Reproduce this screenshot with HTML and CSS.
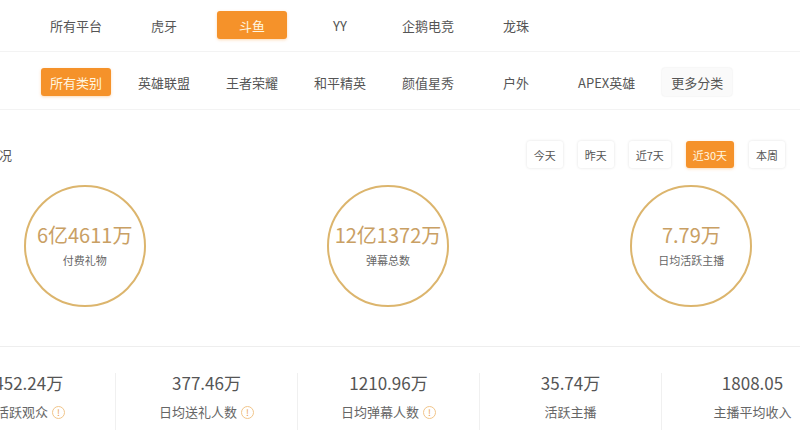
FILE: index.html
```html
<!DOCTYPE html>
<html lang="zh-CN">
<head>
    <meta charset="UTF-8">
    <meta name="viewport" content="width=device-width, initial-scale=1.0">
    <title>直播数据概况</title>
    <link rel="stylesheet" href="styles.css">
</head>
<body>
    <!-- Platform filter -->
    <div class="filter-row platforms">
        <span class="tab">所有平台</span>
        <span class="tab">虎牙</span>
        <span class="tab active">斗鱼</span>
        <span class="tab">YY</span>
        <span class="tab">企鹅电竞</span>
        <span class="tab">龙珠</span>
    </div>

    <!-- Category filter -->
    <div class="filter-row categories">
        <span class="tab active">所有类别</span>
        <span class="tab">英雄联盟</span>
        <span class="tab">王者荣耀</span>
        <span class="tab">和平精英</span>
        <span class="tab">颜值星秀</span>
        <span class="tab">户外</span>
        <span class="tab">APEX英雄</span>
        <span class="tab more">更多分类</span>
    </div>

    <div class="overview">
        <div class="overview-head">
            <h2 class="overview-title">整体概况</h2>
            <div class="date-range">
                <span class="date-btn">今天</span>
                <span class="date-btn">昨天</span>
                <span class="date-btn">近7天</span>
                <span class="date-btn active">近30天</span>
                <span class="date-btn">本周</span>
            </div>
        </div>

        <div class="rings">
            <div class="ring-cell">
                <div class="ring">
                    <div class="ring-value">6亿4611万</div>
                    <div class="ring-label">付费礼物</div>
                </div>
            </div>
            <div class="ring-cell">
                <div class="ring">
                    <div class="ring-value">12亿1372万</div>
                    <div class="ring-label">弹幕总数</div>
                </div>
            </div>
            <div class="ring-cell">
                <div class="ring">
                    <div class="ring-value">7.79万</div>
                    <div class="ring-label">日均活跃主播</div>
                </div>
            </div>
        </div>

        <div class="stats">
            <div class="stat">
                <div class="stat-value">1452.24万</div>
                <div class="stat-label">日活跃观众 <i class="info">!</i></div>
            </div>
            <div class="stat">
                <div class="stat-value">377.46万</div>
                <div class="stat-label">日均送礼人数 <i class="info">!</i></div>
            </div>
            <div class="stat">
                <div class="stat-value">1210.96万</div>
                <div class="stat-label">日均弹幕人数 <i class="info">!</i></div>
            </div>
            <div class="stat">
                <div class="stat-value">35.74万</div>
                <div class="stat-label">活跃主播</div>
            </div>
            <div class="stat">
                <div class="stat-value">1808.05</div>
                <div class="stat-label">主播平均收入</div>
            </div>
        </div>
    </div>
</body>
</html>
```

FILE: styles.css
```css
/* Base */
body {
    margin: 0;
    background: #fff;
    color: #555;
    font-family: "Noto Sans CJK SC", "Noto Sans", sans-serif;
    overflow: hidden;
}

/* Filter rows */
.filter-row {
    display: flex;
    gap: 18px;
    padding-left: 41px;
    border-bottom: 1px solid #f3f3f3;
}

.platforms {
    padding-top: 11px;
    height: 52px;
    box-sizing: border-box;
}

.categories {
    padding-top: 16px;
    height: 58px;
    box-sizing: border-box;
}

.tab {
    min-width: 70px;
    height: 28px;
    padding: 0 9px;
    box-sizing: border-box;
    display: flex;
    align-items: center;
    justify-content: center;
    font-size: 13px;
    color: #555;
    border-radius: 3px;
    white-space: nowrap;
}

.tab.active {
    background: #f5922a;
    color: #fff6e0;
    box-shadow: 0 1px 3px rgba(245, 146, 42, 0.35);
}

.tab.more {
    background: #fafafa;
    box-shadow: 0 0 2px rgba(0, 0, 0, 0.12);
}

/* Overview block (wider than the window, cropped on both sides) */
.overview {
    margin-left: -67px;
    width: 910px;
}

.overview-head {
    display: flex;
    align-items: center;
    justify-content: space-between;
    padding: 31px 58px 0 27px;
}

.overview-title {
    margin: 0;
    font-size: 13px;
    font-weight: normal;
    color: #555;
}

.date-range {
    display: flex;
    gap: 15px;
}

.date-btn {
    height: 27px;
    padding: 0 7px;
    display: flex;
    align-items: center;
    font-size: 11px;
    color: #555;
    border-radius: 3px;
    background: #fff;
    box-shadow: 0 0 3px rgba(0, 0, 0, 0.12);
}

.date-btn.active {
    background: #f5922a;
    color: #fff6e0;
    box-shadow: 0 1px 3px rgba(245, 146, 42, 0.35);
}

/* Rings */
.rings {
    display: grid;
    grid-template-columns: repeat(3, 1fr);
    padding: 17px 0 39px;
    border-bottom: 1px solid #eee;
}

.ring-cell {
    display: flex;
    justify-content: center;
}

.ring {
    width: 122px;
    height: 122px;
    box-sizing: border-box;
    border: 2px solid #dcb56d;
    border-radius: 50%;
    display: flex;
    flex-direction: column;
    align-items: center;
    justify-content: center;
    gap: 6px;
    padding-bottom: 2px;
}

.ring-value {
    font-size: 20px;
    color: #c9a064;
    line-height: 24px;
}

.ring-label {
    font-size: 11px;
    color: #666;
    line-height: 14px;
}

/* Stats */
.stats {
    display: grid;
    grid-template-columns: repeat(5, 1fr);
    padding-top: 26px;
}

.stat {
    display: flex;
    flex-direction: column;
    align-items: center;
    gap: 10px;
    border-left: 1px solid #f0f0f0;
    height: 58px;
}

.stat:first-child {
    border-left: none;
}

.stat-value {
    font-size: 17px;
    line-height: 20px;
    color: #555;
}

.stat-label {
    font-size: 13px;
    line-height: 18px;
    color: #666;
    display: flex;
    align-items: center;
    gap: 4px;
}

.info {
    width: 11px;
    height: 11px;
    border: 1px solid #f1c58a;
    border-radius: 50%;
    font-size: 9px;
    line-height: 11px;
    font-style: normal;
    text-align: center;
    color: #e8a04a;
}
```
